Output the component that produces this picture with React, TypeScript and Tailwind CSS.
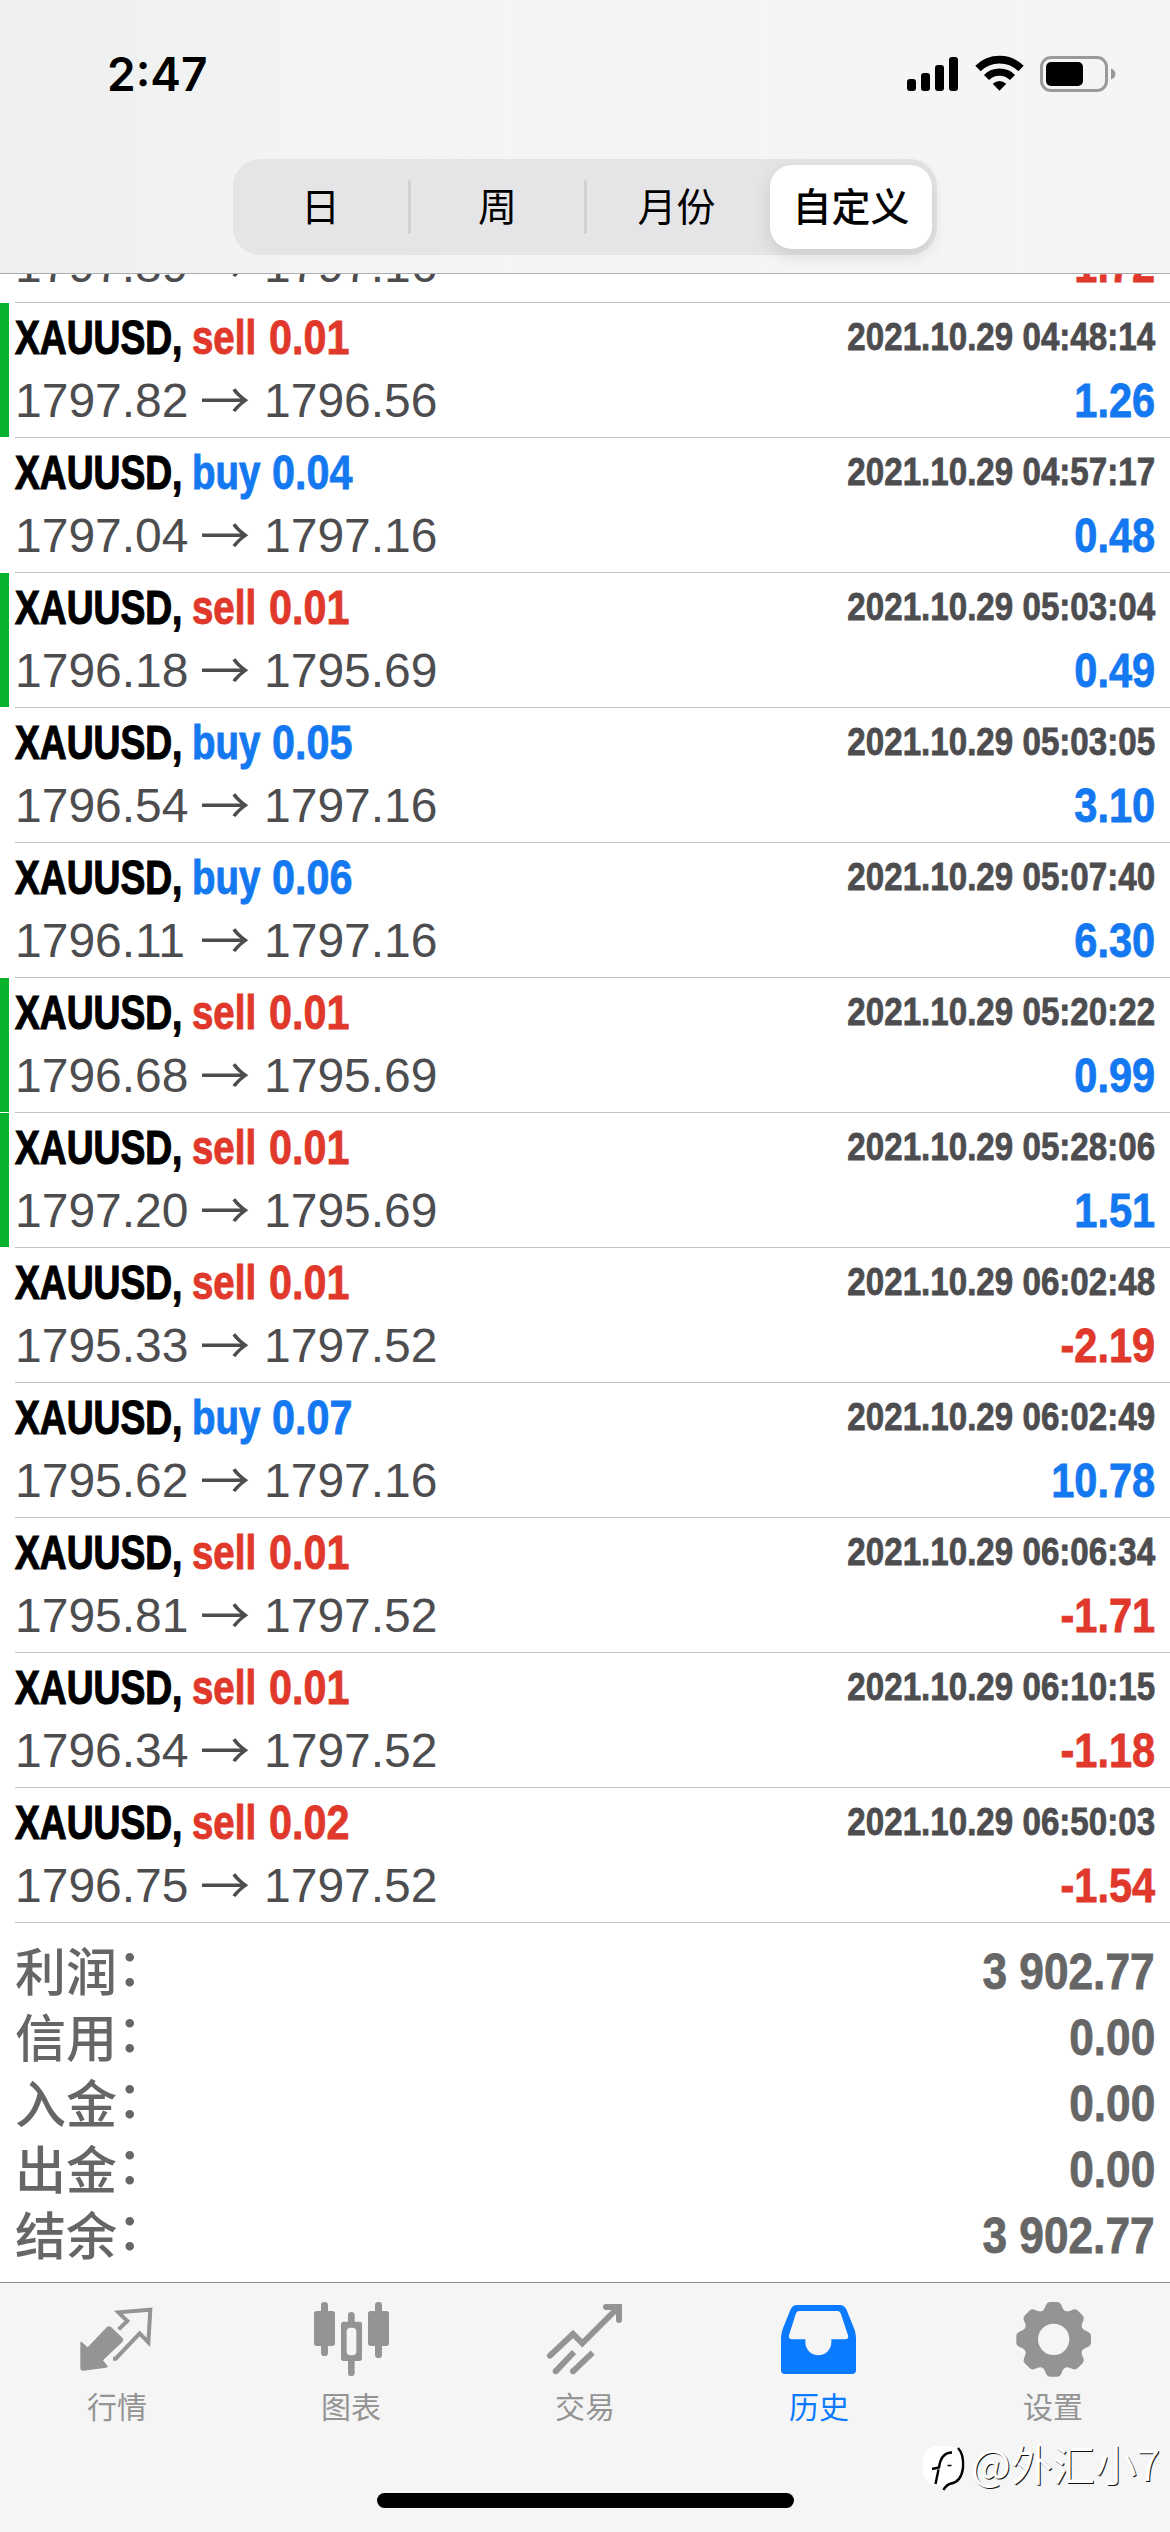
import React from "react";
import clsx from "clsx";

interface Deal {
  side: "buy" | "sell";
  volume: string;
  open: string;
  close: string;
  time: string;
  profit: string;
  tp?: boolean;
}

const deals: Deal[] = [
  { side: "sell", volume: "0.01", open: "1797.89", close: "1797.16", time: "2021.10.29 04:46:52", profit: "-1.72" },
  { side: "sell", volume: "0.01", open: "1797.82", close: "1796.56", time: "2021.10.29 04:48:14", profit: "1.26", tp: true },
  { side: "buy", volume: "0.04", open: "1797.04", close: "1797.16", time: "2021.10.29 04:57:17", profit: "0.48" },
  { side: "sell", volume: "0.01", open: "1796.18", close: "1795.69", time: "2021.10.29 05:03:04", profit: "0.49", tp: true },
  { side: "buy", volume: "0.05", open: "1796.54", close: "1797.16", time: "2021.10.29 05:03:05", profit: "3.10" },
  { side: "buy", volume: "0.06", open: "1796.11", close: "1797.16", time: "2021.10.29 05:07:40", profit: "6.30" },
  { side: "sell", volume: "0.01", open: "1796.68", close: "1795.69", time: "2021.10.29 05:20:22", profit: "0.99", tp: true },
  { side: "sell", volume: "0.01", open: "1797.20", close: "1795.69", time: "2021.10.29 05:28:06", profit: "1.51", tp: true },
  { side: "sell", volume: "0.01", open: "1795.33", close: "1797.52", time: "2021.10.29 06:02:48", profit: "-2.19" },
  { side: "buy", volume: "0.07", open: "1795.62", close: "1797.16", time: "2021.10.29 06:02:49", profit: "10.78" },
  { side: "sell", volume: "0.01", open: "1795.81", close: "1797.52", time: "2021.10.29 06:06:34", profit: "-1.71" },
  { side: "sell", volume: "0.01", open: "1796.34", close: "1797.52", time: "2021.10.29 06:10:15", profit: "-1.18" },
  { side: "sell", volume: "0.02", open: "1796.75", close: "1797.52", time: "2021.10.29 06:50:03", profit: "-1.54" },
];

const totals = [
  { label: "利润", value: "3 902.77" },
  { label: "信用", value: "0.00" },
  { label: "入金", value: "0.00" },
  { label: "出金", value: "0.00" },
  { label: "结余", value: "3 902.77" },
];

function StatusBar() {
  return (
    <div className="flex h-[148px] items-start justify-between pl-[107px] pr-[54px]">
      <span className="mt-[46px] font-['Inter'] text-[46px] font-semibold leading-[56px] text-black">
        2:47
      </span>
      <div className="mt-[54px] flex">
        <svg className="h-10 w-[52px]" viewBox="0 0 52 40">
          <rect x="0" y="25" width="9" height="12" rx="3" />
          <rect x="14" y="19" width="9" height="18" rx="3" />
          <rect x="28" y="11" width="9" height="26" rx="3" />
          <rect x="42" y="3" width="9" height="34" rx="3" />
        </svg>
        <svg className="ml-4 h-10 w-[49px]" viewBox="0 0 49 40">
          <path d="M3 14.5 A30.5 30.5 0 0 1 46 14.5" fill="none" stroke="#000" strokeWidth="7.6" />
          <path d="M11.5 23.5 A18.5 18.5 0 0 1 37.5 23.5" fill="none" stroke="#000" strokeWidth="7.2" />
          <path d="M17.7 29.7 Q24.5 24.5 31.3 29.7 L24.5 36.8Z" />
        </svg>
        <svg className="ml-4 h-10 w-[76px]" viewBox="0 0 76 40">
          <rect x="1.5" y="3.5" width="65" height="33" rx="9.5" fill="none" stroke="#9a9a9b" strokeWidth="3" />
          <rect x="6" y="8" width="37" height="24" rx="5" />
          <path d="M71 14.5 Q75.5 16 75.5 20 Q75.5 24 71 25.5Z" fill="#9a9a9b" />
        </svg>
      </div>
    </div>
  );
}

function PeriodTabs() {
  return (
    <div className="mx-auto mt-[11px] flex h-24 w-[704px] items-center rounded-[27px] bg-[#e5e5e7] pr-[5px] font-['Noto_Sans_CJK_SC',sans-serif] text-[39px] leading-[78px] text-black">
      <span className="h-[84px] w-[175px] text-center">日</span>
      <span className="h-[54px] w-[3px] rounded-full bg-[#d0d0d2]" />
      <span className="h-[84px] w-[173px] text-center">周</span>
      <span className="h-[54px] w-[3px] rounded-full bg-[#d0d0d2]" />
      <span className="h-[84px] w-[183px] pr-1 text-center">月份</span>
      <span className="h-[84px] flex-1 rounded-[22px] bg-white text-center font-medium shadow-[0_6px_18px_rgba(0,0,0,0.12)]">
        自定义
      </span>
    </div>
  );
}

function DealRow({ deal }: { deal: Deal }) {
  const sell = deal.side === "sell";
  return (
    <div className="flex h-[135px] shrink-0">
      <div className={clsx("h-[134px] w-[9px]", deal.tp && "bg-[#09b32b]")} />
      <div className="ml-[6px] flex flex-1 justify-between border-b border-[#c2c2c4] pr-[15px] pt-[3px] text-[48px] leading-[63px]">
        <div>
          <div
            className={clsx(
              "flex whitespace-nowrap font-bold",
              sell ? "text-[#e0382b]" : "text-[#1478f0]"
            )}
          >
            <span className="w-[177px] origin-left scale-x-[0.775] text-black [-webkit-text-stroke:1.2px]">XAUUSD,</span>
            <span className={clsx("origin-left scale-x-[0.8] [-webkit-text-stroke:1px]", sell ? "w-[77px]" : "w-[80px]")}>
              {deal.side}
            </span>
            <span className="origin-left scale-x-[0.86] [-webkit-text-stroke:0.8px]">{deal.volume}</span>
          </div>
          <div className="-mt-[5px] flex items-baseline whitespace-nowrap text-[#4d4d50]">
            <span className="w-[185px]">{deal.open}</span>
            <span className="w-[64px] translate-y-[2px] font-['Noto_Sans_CJK_SC',sans-serif] text-[50px]">→</span>
            <span>{deal.close}</span>
          </div>
        </div>
        <div className="text-right font-bold [-webkit-text-stroke:0.8px]">
          <div className="-mt-px mb-px origin-right scale-x-[0.85] text-[39px] text-[#4d4d50]">{deal.time}</div>
          <div
            className={clsx(
              "origin-right scale-x-[0.865]",
              deal.profit.startsWith("-") ? "text-[#e0382b]" : "text-[#1478f0]"
            )}
          >
            {deal.profit}
          </div>
        </div>
      </div>
    </div>
  );
}

function Totals() {
  return (
    <div className="h-[359px] pl-[15px] pr-[15px] pt-[14px] text-[#666667]">
      {totals.map(({ label, value }) => (
        <div key={label} className="flex h-[66px] justify-between">
          <span className="-mt-px flex font-['Noto_Sans_CJK_SC',sans-serif] text-[51px] font-medium leading-[66px]">
            {label}
            <span className="-mt-[5px]">：</span>
          </span>
          <span className="mt-[2px] origin-right scale-x-[0.885] text-[50px] font-bold leading-[66px] [-webkit-text-stroke:0.8px]">
            {value}
          </span>
        </div>
      ))}
    </div>
  );
}

function QuotesIcon() {
  return (
    <svg viewBox="230 90 240 240" fill="currentColor">
      <path d="M240 217 Q240 212 245 217 L262 232 L319 172 Q326 165 333 172 L366 203 Q372 210 366 216 L308 271 L321 287 Q324 292 317 293 L250 302 Q240 303 240 293Z" />
      <path d="M355 178 L381 153 L354 127 L450 119 L444 217 L418 190 L346 266 H338" fill="none" stroke="currentColor" strokeWidth="12" />
    </svg>
  );
}

function ChartIcon() {
  return (
    <svg viewBox="930 90 240 240" fill="currentColor">
      <rect x="939" y="123" width="63" height="105" rx="8" />
      <rect x="960" y="96" width="21" height="162" rx="10" />
      <rect x="1101" y="123" width="63" height="105" rx="8" />
      <rect x="1122" y="96" width="21" height="168" rx="10" />
      <rect x="1041" y="126" width="20" height="192" rx="10" />
      <rect x="1020" y="155" width="63" height="118" rx="8" />
      <rect x="1037" y="173" width="29" height="83" rx="12" fill="#f5f5f5" />
    </svg>
  );
}

function TradeIcon() {
  return (
    <svg viewBox="435 90 240 240" fill="none" stroke="currentColor" strokeWidth="18">
      <path d="M450 257 L519 192 L547 220 L655 112" strokeLinecap="round" />
      <path d="M618 111 H657 V150" strokeLinecap="round" />
      <path d="M467 304 L522 246 M519 304 L578 248" />
      <g fill="currentColor" stroke="none">
        <circle cx="467" cy="304" r="9" />
        <circle cx="519" cy="304" r="9" />
      </g>
    </svg>
  );
}

function HistoryIcon() {
  return (
    <svg viewBox="27 90 240 240" fill="currentColor" fillRule="evenodd">
      <path d="M80 105 H210 Q222 105 229 118 L248 165 Q258 187 258 205 V300 Q258 312 246 312 H45 Q33 312 33 300 V205 Q33 187 44 162 L62 118 Q68 105 80 105Z M88 123 Q81 123 78 130 L57 196 Q55 208 66 208 H106 V217 A39 39 0 0 0 184 217 V208 H226 Q237 208 234 196 L212 130 Q209 123 202 123Z" />
    </svg>
  );
}

function SettingsIcon() {
  return (
    <svg viewBox="-122 -118 240 240" fill="currentColor">
      {[0, 45, 90, 135, 180, 225, 270, 315].map((deg) => (
        <path
          key={deg}
          transform={`rotate(${deg})`}
          d="M-36 -84 C-28 -88 -27 -94 -23 -103 Q-19 -112 -11 -112 H11 Q19 -112 23 -103 C27 -94 28 -88 36 -84 L18 -60 H-18Z"
        />
      ))}
      <circle r="69" fill="none" stroke="currentColor" strokeWidth="44" />
    </svg>
  );
}

const tabs = [
  { label: "行情", icon: QuotesIcon },
  { label: "图表", icon: ChartIcon },
  { label: "交易", icon: TradeIcon },
  { label: "历史", icon: HistoryIcon, active: true },
  { label: "设置", icon: SettingsIcon },
];

function TabBar() {
  return (
    <div className="relative h-[250px] border-t border-[#8e8e90] bg-[#f5f5f5]">
      <div className="grid grid-cols-5 pt-[17px]">
        {tabs.map(({ label, icon: Icon, active }) => (
          <div
            key={label}
            className={clsx("flex flex-col items-center", active ? "text-[#0a7aff]" : "text-[#949494]")}
          >
            <div className="size-20">
              <Icon />
            </div>
            <span className="mb-[2px] mt-[3px] font-['Noto_Sans_CJK_SC',sans-serif] text-[30px] leading-[44px]">
              {label}
            </span>
          </div>
        ))}
      </div>
      <div className="mx-auto mt-[64px] h-[15px] w-[417px] rounded-full bg-black" />
      <div className="absolute right-[10px] top-[150px] flex items-center">
        <svg className="mt-[11px] h-[48px] w-[44px]" viewBox="0 0 44 48">
          <rect x="0" y="2" width="40" height="40" rx="15" fill="#fff" />
          <path d="M9 25 L16 23.5 Q18 8.5 29 8.5 M15.5 25.5 L12.5 40" fill="none" stroke="#000" strokeWidth="2.4" />
          <path d="M24.5 21.5 H28.5" stroke="#000" strokeWidth="1.5" />
          <path d="M35 4 Q41 10 40 24 Q38 38 28 39.5 Q23 41 20.5 46" fill="none" stroke="#000" strokeWidth="2.4" />
        </svg>
        <span className="ml-1 font-['Noto_Sans_CJK_SC',sans-serif] text-[42px] leading-[48px] text-white [text-shadow:1px_1px_0_#111]">
          @外汇小7
        </span>
      </div>
    </div>
  );
}

export default function App() {
  return (
    <div className="flex h-[2532px] w-[1170px] flex-col overflow-hidden bg-white font-['Liberation_Sans',Arial,sans-serif]">
      <header className="h-[274px] shrink-0 border-b border-[#acacae] bg-linear-to-r from-[#eef0ef] via-[#f5f5f6] via-40% to-[#f5f5f7]">
        <StatusBar />
        <PeriodTabs />
      </header>
      <div className="flex h-[1649px] shrink-0 flex-col justify-end overflow-hidden">
        {deals.map((deal) => (
          <DealRow key={deal.time} deal={deal} />
        ))}
      </div>
      <Totals />
      <TabBar />
    </div>
  );
}
